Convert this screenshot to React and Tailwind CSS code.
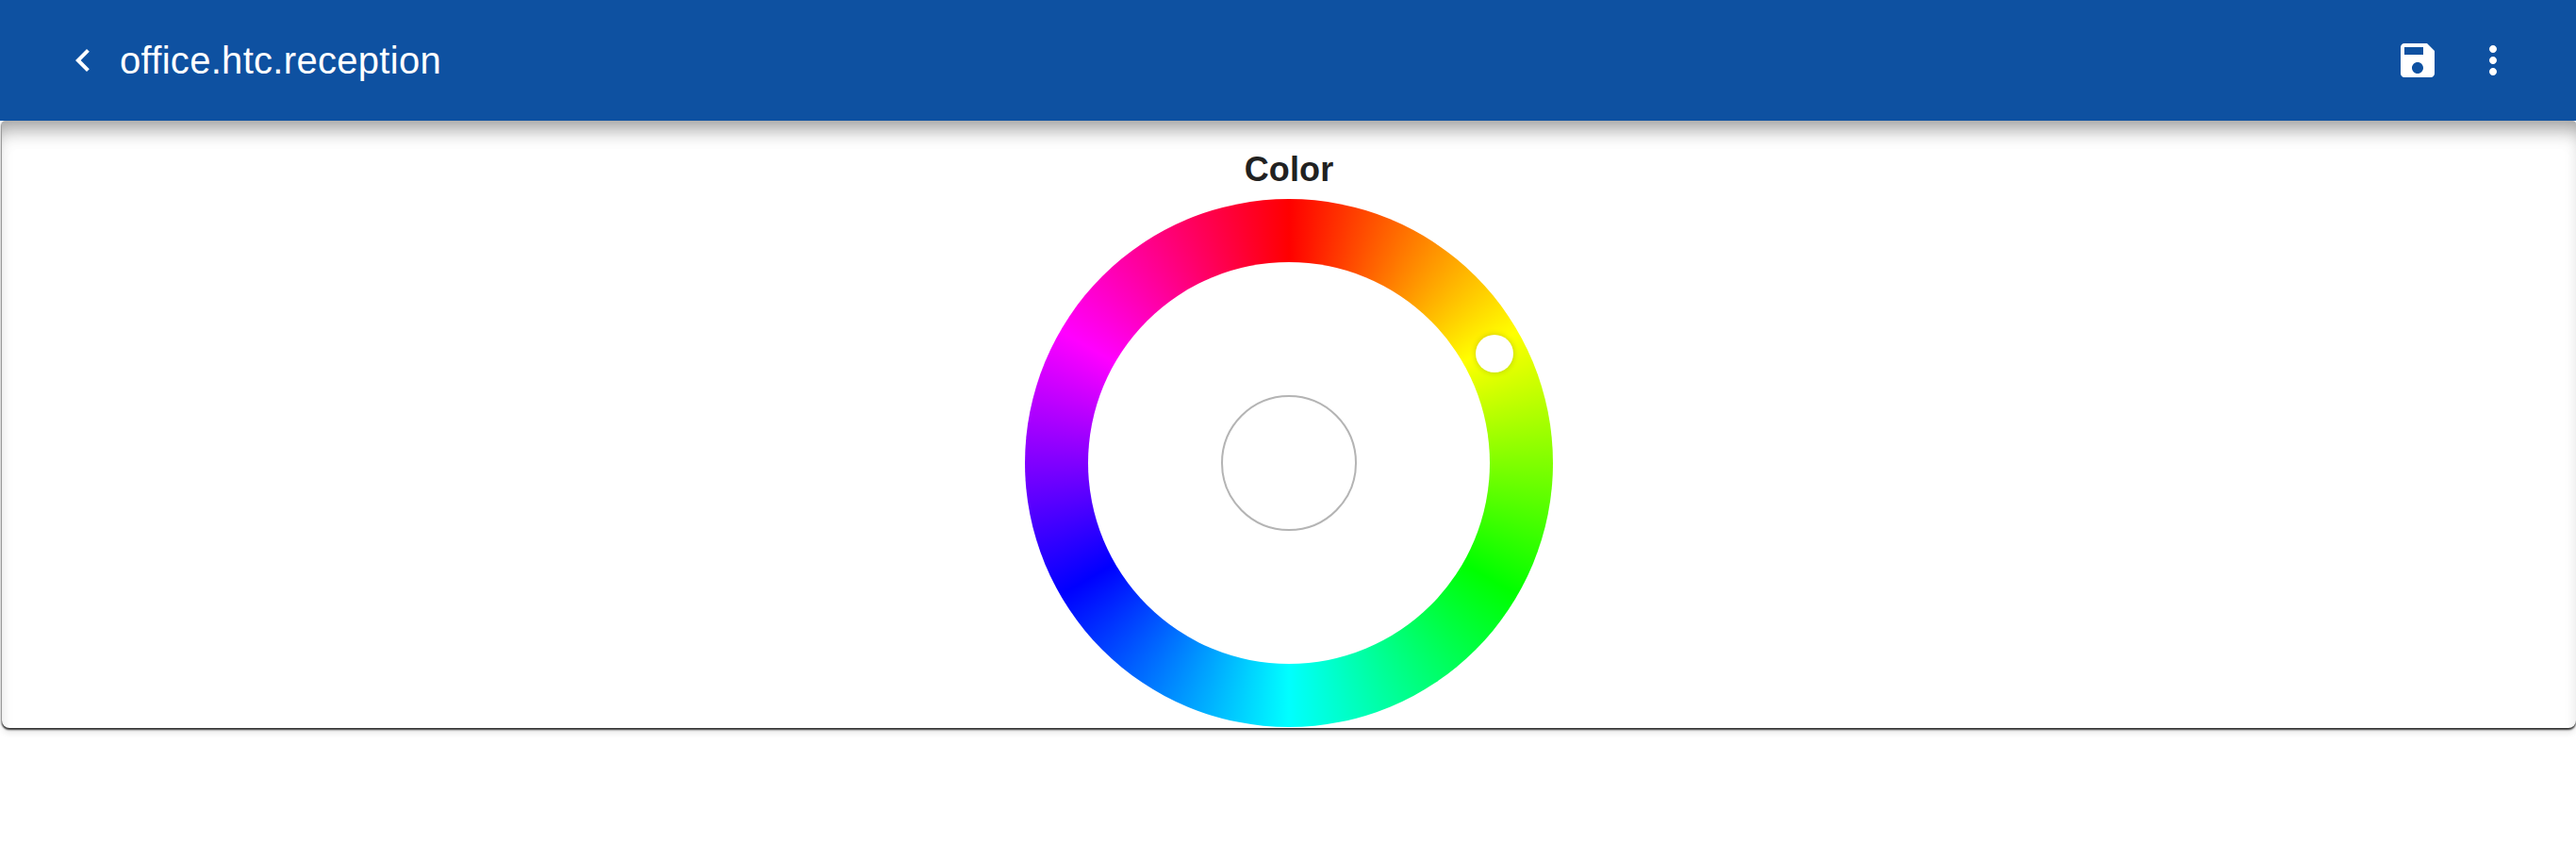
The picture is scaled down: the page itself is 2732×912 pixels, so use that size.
const SANS = "font-['Liberation_Sans',Arial,sans-serif]"

function IconButton({ d, className = '' }) {
  return (
    <button className={`w-12 h-12 text-white ${className}`}>
      <svg viewBox="0 0 24 24" className="w-12 h-12 fill-current">
        <path d={d} />
      </svg>
    </button>
  )
}

function ColorWheel() {
  return (
    <div className="relative w-[560px] h-[560px] rounded-full flex items-center justify-center bg-[conic-gradient(#f00,#ff0,#0f0,#0ff,#00f,#f0f,#f00)]">
      <div className="w-[426px] h-[426px] rounded-full bg-white flex items-center justify-center">
        <div className="w-[144px] h-[144px] rounded-full bg-white border-2 border-[#b4b4b4]" />
      </div>
      {/* handle */}
      <div className="absolute left-[478px] top-[144px] w-10 h-10 rounded-full bg-white shadow-[0_0_6px_rgba(0,0,0,0.2)]" />
    </div>
  )
}

export default function App() {
  return (
    <div className={`min-h-[912px] bg-white flex flex-col ${SANS}`}>
      {/* Toolbar */}
      <header className="relative z-10 h-[128px] shrink-0 bg-[#0e51a1] flex items-center px-16">
        <IconButton d="M15.41 7.41L14 6l-6 6 6 6 1.41-1.41L10.83 12z" />
        <h1 className="ml-[15px] text-[40px] leading-[48px] tracking-[0.3px] text-white">office.htc.reception</h1>
        <div className="ml-auto flex items-center gap-8">
          <IconButton d="M17 3H5c-1.11 0-2 .9-2 2v14c0 1.1.89 2 2 2h14c1.1 0 2-.9 2-2V7l-4-4zm-5 16c-1.66 0-3-1.34-3-3s1.34-3 3-3 3 1.34 3 3-1.34 3-3 3zm3-10H5V5h10v4z" />
          <IconButton d="M12 8c1.1 0 2-.9 2-2s-.9-2-2-2-2 .9-2 2 .9 2 2 2zm0 2c-1.1 0-2 .9-2 2s.9 2 2 2 2-.9 2-2-.9-2-2-2zm0 6c-1.1 0-2 .9-2 2s.9 2 2 2 2-.9 2-2-.9-2-2-2z" />
        </div>
      </header>

      {/* Card, the toolbar's shadow stays inside it */}
      <main className="ml-[2px] h-[644px] flex flex-col items-center pt-[31px] rounded-t-[4px] rounded-b-[8px] bg-white shadow-[inset_0_18px_20px_-10px_rgba(0,0,0,0.35),inset_0_24px_24px_-12px_rgba(0,0,0,0.06),0_2px_2px_rgba(0,0,0,0.75),-1px_1px_2px_rgba(0,0,0,0.3),0_6px_6px_rgba(0,0,0,0.08)]">
        <h2 className="text-[36px] leading-[42px] tracking-[0.1px] font-bold text-[#212121] mb-[10px]">Color</h2>
        <ColorWheel />
      </main>
    </div>
  )
}
